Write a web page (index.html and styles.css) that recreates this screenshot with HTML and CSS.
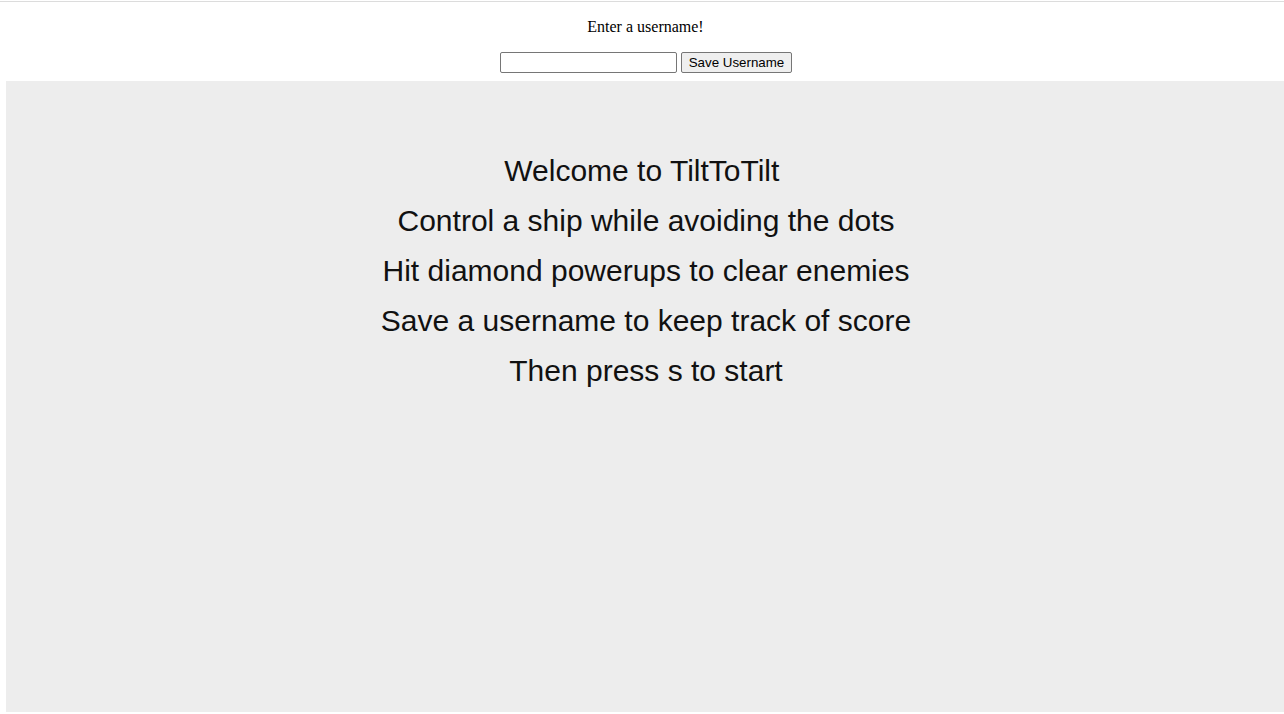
FILE: index.html
```html
<!DOCTYPE html>
<html>
<head>
<meta charset="utf-8">
<link rel="stylesheet" href="styles.css">
</head>
<body>
<div class="rule"></div>
<p class="prompt">Enter a username!</p>
<div class="form-row">
  <input class="name-input" type="text">
  <button class="save-btn">Save Username</button>
</div>
<div class="stage">
  <div class="intro">
    <div class="line">Welcome to TiltToTilt </div>
    <div class="line">Control a ship while avoiding the dots</div>
    <div class="line">Hit diamond powerups to clear enemies</div>
    <div class="line">Save a username to keep track of score</div>
    <div class="line">Then press s to start</div>
  </div>
</div>
</body>
</html>
```
FILE: styles.css
```css
html, body {
  margin: 0;
  padding: 0;
  background: #ffffff;
  overflow: hidden;
}
body {
  font-family: "Liberation Serif", "Times New Roman", serif;
  font-size: 16px;
  color: #000;
}
.rule {
  margin-top: 1px;
  height: 1px;
  background: #dcdcdc;
}
.prompt {
  margin: 16px 0 0 0;
  padding-left: 7px;
  height: 18px;
  line-height: 18px;
  text-align: center;
}
.form-row {
  display: flex;
  justify-content: center;
  align-items: center;
  gap: 4px;
  margin-top: 16px;
  padding-left: 8px;
  height: 21px;
}
.name-input {
  box-sizing: border-box;
  width: 177px;
  height: 21px;
  border: 1px solid #767676;
  border-radius: 2px;
  padding: 1px 2px;
  font-family: "Liberation Sans", Arial, sans-serif;
  font-size: 13.33px;
  margin: 0;
}
.save-btn {
  box-sizing: border-box;
  height: 21px;
  width: 111px;
  padding: 0 6px;
  margin: 0;
  border: 1px solid #767676;
  border-radius: 2px;
  background: #efefef;
  font-family: "Liberation Sans", Arial, sans-serif;
  font-size: 13.33px;
  color: #000;
}
.stage {
  margin-top: 8px;
  margin-left: 6px;
  width: 1280px;
  height: 631px;
  background: #ededed;
}
.intro {
  padding-top: 70px;
  display: flex;
  flex-direction: column;
  align-items: center;
  font-family: "Liberation Sans", Arial, sans-serif;
  font-size: 30px;
  color: #111;
}
.line {
  height: 50px;
  line-height: 40px;
  white-space: pre;
}
```
